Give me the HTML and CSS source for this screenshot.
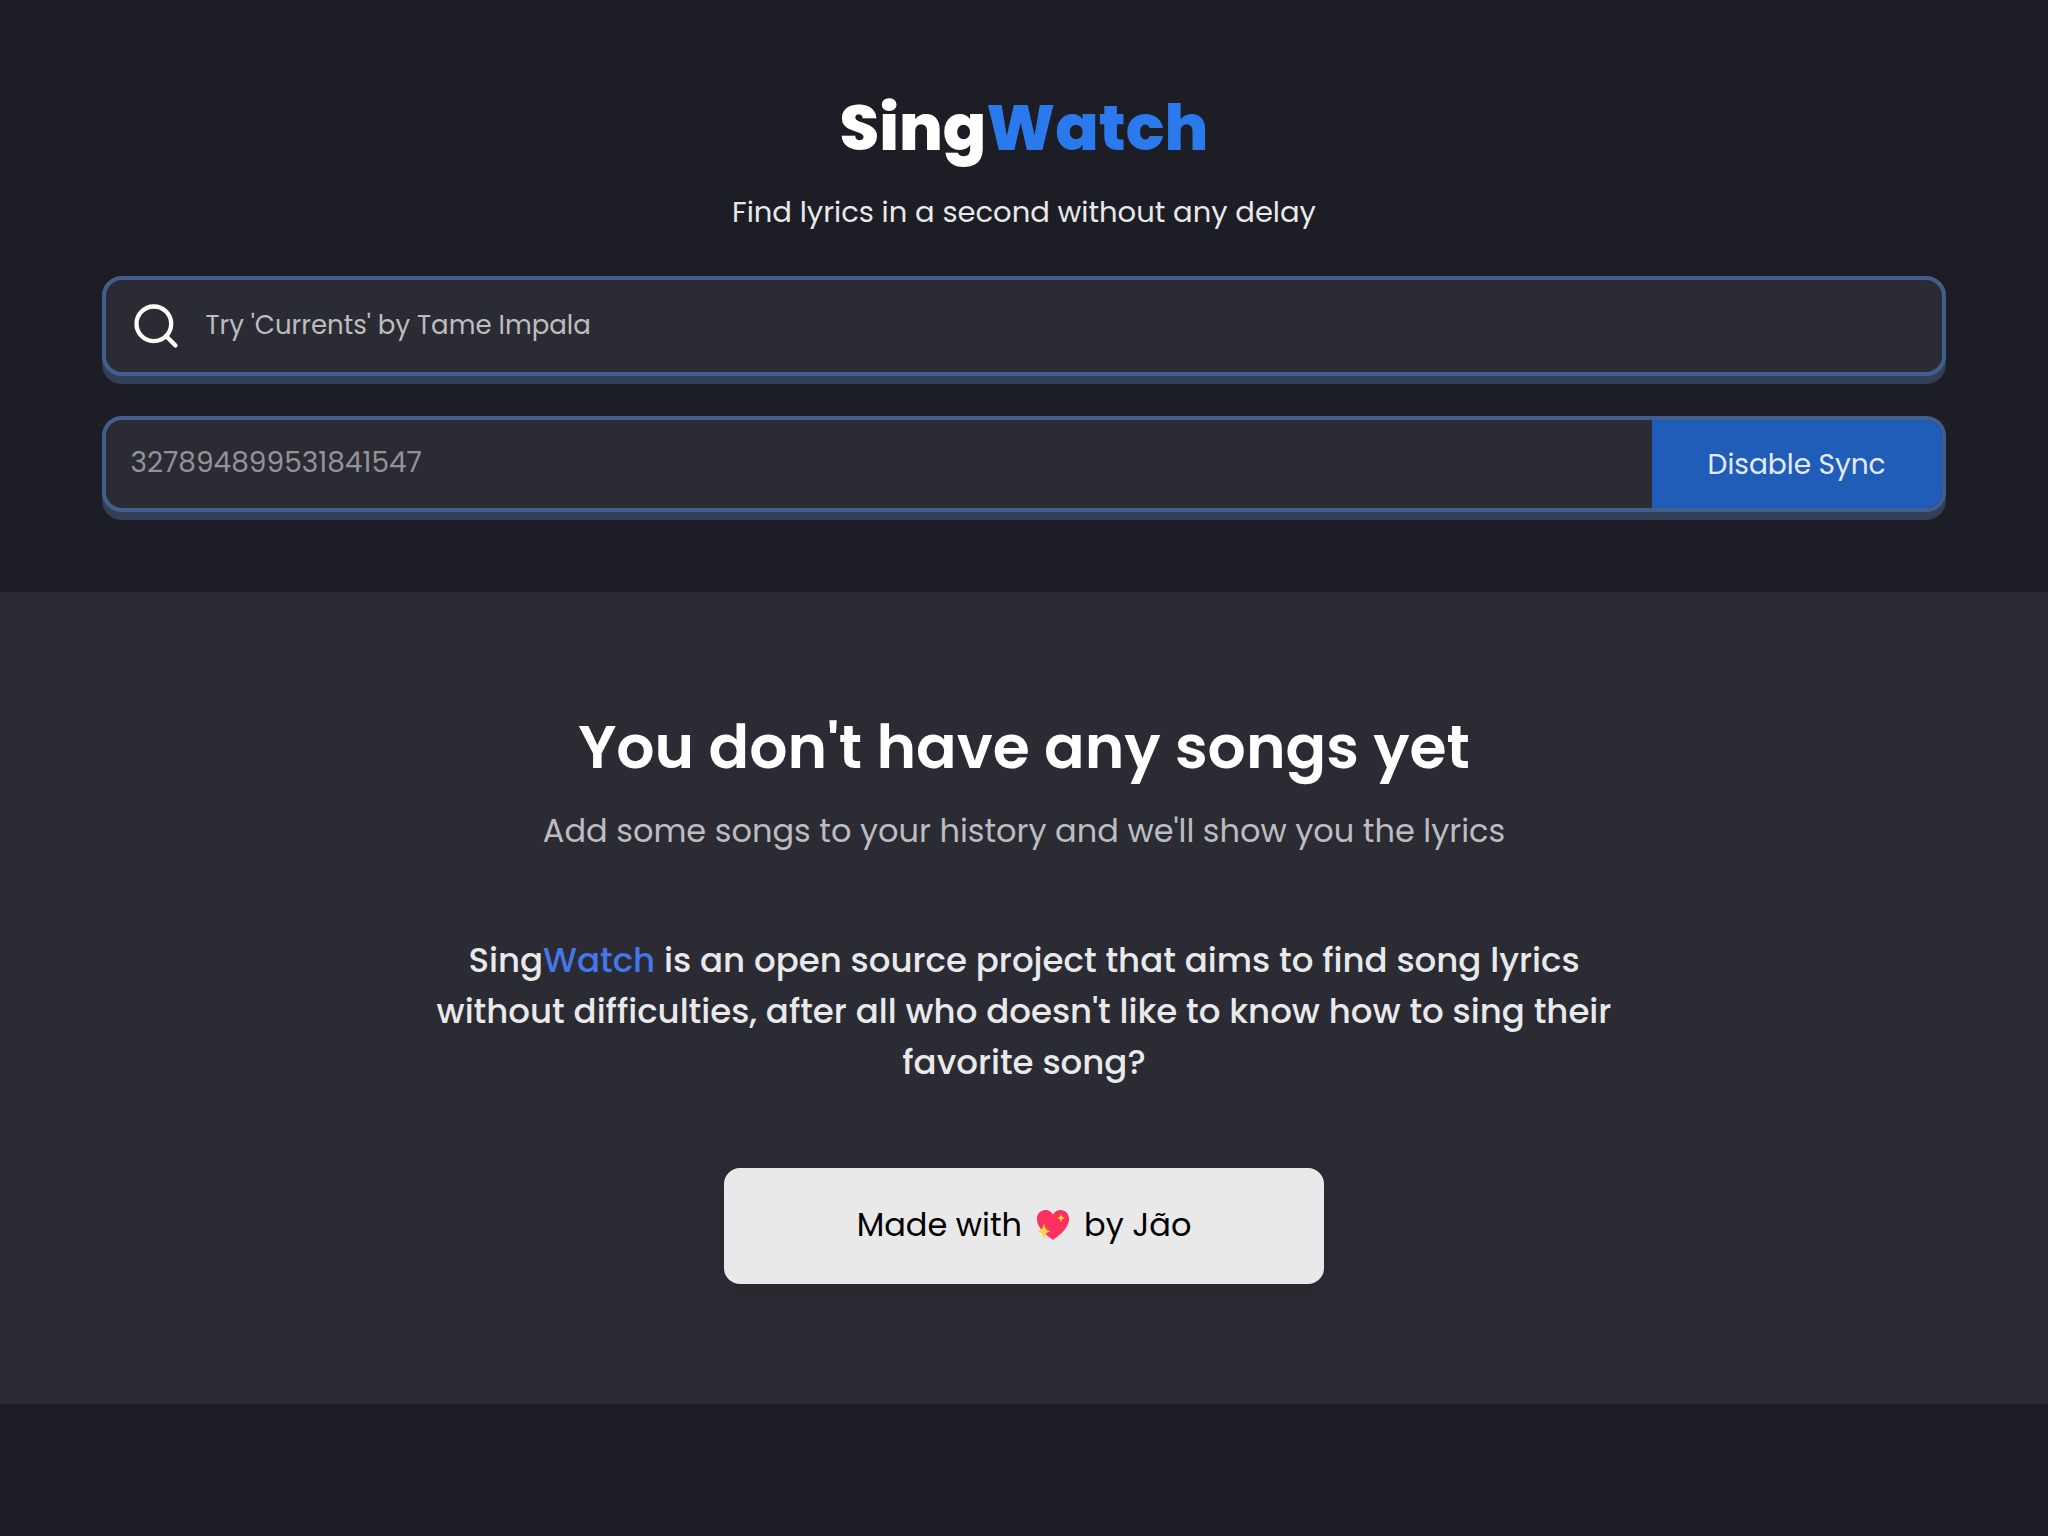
FILE: index.html
```html
<!DOCTYPE html>
<html lang="en">
<head>
  <meta charset="utf-8">
  <meta name="viewport" content="width=device-width, initial-scale=1">
  <title>SingWatch</title>
  <link rel="stylesheet" href="styles.css">
</head>
<body>
  <header class="header">
    <h1 class="logo">Sing<span class="logo-accent">Watch</span></h1>
    <p class="tagline">Find lyrics in a second without any delay</p>
    <form class="forms">
      <label class="field search-field">
        <svg class="search-icon" viewBox="0 0 24 24" fill="none" stroke="currentColor" stroke-width="2" stroke-linecap="round" stroke-linejoin="round" aria-hidden="true">
          <circle cx="11" cy="11" r="8"/>
          <path d="M21 21l-4.35-4.35"/>
        </svg>
        <input class="search-input" type="text" aria-label="Search lyrics" placeholder="Try 'Currents' by Tame Impala">
      </label>
      <div class="field sync-field">
        <input class="sync-input" type="text" aria-label="User ID" value="327894899531841547" disabled>
        <button class="sync-button" type="button">Disable Sync</button>
      </div>
    </form>
  </header>
  <main class="content">
    <h2 class="empty-title">You don't have any songs yet</h2>
    <p class="empty-text">Add some songs to your history and we'll show you the lyrics</p>
    <p class="about">Sing<span class="about-accent">Watch</span> is an open source project that aims to find song lyrics without difficulties, after all who doesn't like to know how to sing their favorite song?</p>
    <a class="credit" href="#">
      <span>Made with</span>
      <svg class="heart" viewBox="0 0 36 36" role="img" aria-label="love">
        <path fill="#fc3160" d="M18 34C15 31.500 1 23 1 11.500 1 6 5 2 10 2c3.500 0 6.500 2 8 5 1.500-3 4.500-5 8-5 5 0 9 4 9 9.500C35 23 21 31.500 18 34z"/>
        <path fill="#ffd43b" d="M8.500 15.500c1 6 2.500 8 7 9-4.500 1-6 3-7 9-1-6-2.500-8-7-9 4.500-1 6-3 7-9zM26.500 5.500c.6 3.500 1.500 4.400 4.500 5-3 .6-3.900 1.500-4.500 5-.6-3.500-1.500-4.400-4.500-5 3-.6 3.900-1.500 4.500-5z"/>
      </svg>
      <span>by Jão</span>
    </a>
  </main>
</body>
</html>
```
FILE: styles.css
```css
* {
  box-sizing: border-box;
  margin: 0;
}

body {
  min-height: 100vh;
  background: #1d1d26;
  color: #e9e9e9;
  font-family: Poppins, Inter, sans-serif;
}

input,
button {
  border: 0;
  font: inherit;
}

.header {
  padding: 80px 5%;
  text-align: center;
}

.logo {
  color: #fff;
  font-size: 64px;
  font-weight: 800;
  line-height: 96px;
}

.logo-accent {
  color: #2a7aee;
}

.tagline {
  margin-top: 12px;
  font-size: 29px;
  line-height: 48px;
}

.forms {
  display: grid;
  gap: 40px;
  margin-top: 40px;
}

.field {
  display: flex;
  border: 4px solid #415e8c;
  border-radius: 20px;
  background: #2b2b34;
  box-shadow: 0 8px #314056;
  overflow: hidden;
}

.search-field {
  align-items: center;
  gap: 23px;
  padding: 0 24px;
}

.search-icon {
  flex: none;
  width: 52px;
  height: 52px;
  color: #fff;
}

.search-input {
  flex: 1;
  min-width: 0;
  height: 92px;
  padding: 0 0 2px;
  outline: 0;
  background: none;
  color: #fff;
  font-size: 26px;
}

.search-input::placeholder {
  color: #bdbdbf;
}

.sync-input {
  flex: 1;
  min-width: 0;
  height: 88px;
  padding: 0 24px 2px;
  background: none;
  color: #939397;
  font-size: 28px;
}

.sync-button {
  width: 290px;
  padding: 2px 0 0;
  background: #205db9;
  color: #e4ebf5;
  font-size: 28px;
}

.content {
  display: flex;
  flex-direction: column;
  align-items: center;
  padding: 107px 24px 120px;
  background: #2b2b34;
  text-align: center;
}

.empty-title {
  color: #fff;
  font-size: 60px;
  font-weight: 600;
  line-height: 96px;
}

.empty-text {
  margin-top: 9px;
  color: #bdbdbf;
  font-size: 32px;
  line-height: 54px;
}

.about {
  max-width: 1200px;
  margin-top: 77px;
  font-size: 34px;
  font-weight: 500;
  line-height: 51px;
}

.about-accent {
  color: #4576ea;
}

.credit {
  display: flex;
  align-items: center;
  justify-content: center;
  gap: 14px;
  width: 600px;
  max-width: 100%;
  height: 116px;
  margin-top: 80px;
  padding-bottom: 2px;
  border-radius: 16px;
  background: #e9e9e9;
  box-shadow: 0 16px 32px rgba(0, 0, 0, 0.08);
  color: #000;
  font-size: 32px;
  text-decoration: none;
}

.heart {
  width: 34px;
  height: 34px;
}
```
